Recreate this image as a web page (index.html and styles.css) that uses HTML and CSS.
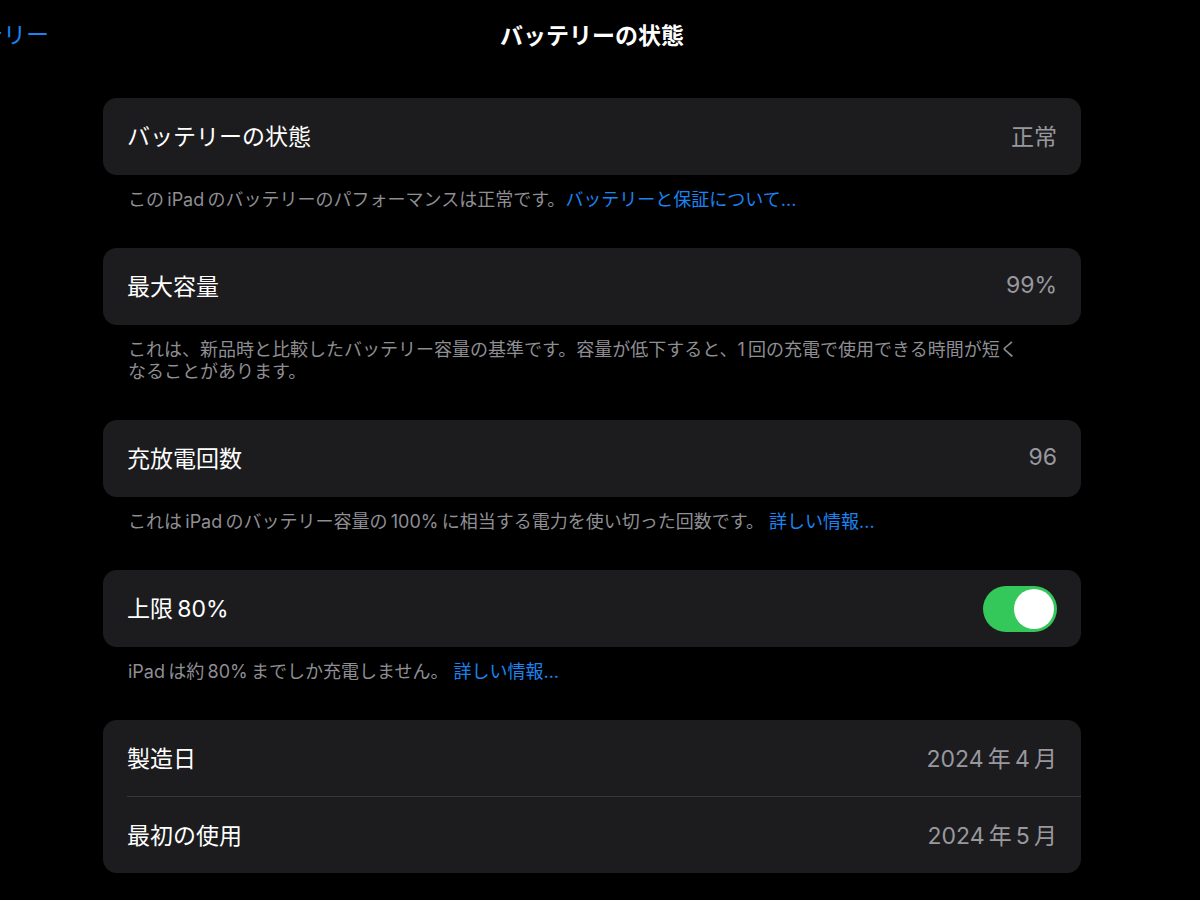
FILE: index.html
```html
<!DOCTYPE html>
<html lang="ja">
<head>
<meta charset="utf-8">
<title>バッテリーの状態</title>
<link rel="stylesheet" href="styles.css">
</head>
<body>
<header class="nav">
  <a class="back">バッテリー</a>
  <h1 class="title">バッテリーの状態</h1>
</header>
<main class="content">
  <section class="group">
    <div class="card">
      <div class="row"><span class="label">バッテリーの状態</span><span class="value">正常</span></div>
    </div>
    <p class="note">この&#8201;iPad&#8201;のバッテリーのパフォーマンスは正常です。<a class="link">バッテリーと保証について...</a></p>
  </section>
  <section class="group">
    <div class="card">
      <div class="row"><span class="label">最大容量</span><span class="value">99%</span></div>
    </div>
    <p class="note">これは、新品時と比較したバッテリー容量の基準です。容量が低下すると、1&#8201;回の充電で使用できる時間が短く<br>なることがあります。</p>
  </section>
  <section class="group">
    <div class="card">
      <div class="row"><span class="label">充放電回数</span><span class="value">96</span></div>
    </div>
    <p class="note">これは&#8201;iPad&#8201;のバッテリー容量の&#8201;100%&#8201;に相当する電力を使い切った回数です。 <a class="link">詳しい情報...</a></p>
  </section>
  <section class="group">
    <div class="card">
      <div class="row"><span class="label">上限&#8201;80%</span><span class="toggle"><span class="knob"></span></span></div>
    </div>
    <p class="note">iPad&#8201;は約&#8201;80%&#8201;までしか充電しません。 <a class="link">詳しい情報...</a></p>
  </section>
  <section class="group">
    <div class="card">
      <div class="row row-split"><span class="label">製造日</span><span class="value">2024&#8201;年&#8201;4&#8201;月</span></div>
      <div class="row row-last"><span class="label">最初の使用</span><span class="value">2024&#8201;年&#8201;5&#8201;月</span></div>
    </div>
  </section>
</main>
</body>
</html>
```

FILE: styles.css
```css
html, body {
  margin: 0;
  padding: 0;
  background: #000;
  width: 1200px;
  height: 900px;
  overflow: hidden;
}
body {
  font-family: "Inter", "Noto Sans CJK JP", sans-serif;
  color: #fff;
}
.nav {
  height: 70px;
  display: flex;
  align-items: center;
  justify-content: center;
  position: relative;
}
.back {
  position: absolute;
  left: -66px;
  top: 0;
  line-height: 70px;
  font-size: 23px;
  color: #1a84f0;
}
.title {
  margin: 0 0 2px -16px;
  font-size: 23px;
  font-weight: 700;
}
.content {
  padding: 28px 119px 0 103px;
}
.group {
  margin-bottom: 37px;
}
.card {
  background: #1c1c1e;
  border-radius: 14px;
  overflow: hidden;
}
.row {
  height: 77px;
  margin-left: 24px;
  padding-right: 24px;
  padding-bottom: 4px;
  box-sizing: border-box;
  display: flex;
  align-items: center;
  justify-content: space-between;
  font-size: 23px;
}
.row-split {
  height: 77px;
  border-bottom: 1px solid #38383a;
  padding-bottom: 3px;
}
.row-last {
  height: 76px;
  padding-bottom: 2px;
}
.label {
  color: #fff;
}
.value {
  color: #98989e;
}
.note {
  margin: 0;
  padding: 14px 24px 0 25px;
  font-size: 18px;
  line-height: 22px;
  color: #8e8e93;
}
.link {
  color: #1a84f0;
}
.toggle {
  width: 74px;
  height: 46px;
  border-radius: 23px;
  background: #34c759;
  display: flex;
  align-items: center;
  justify-content: flex-end;
  padding-right: 3px;
  box-sizing: border-box;
  margin-top: 4px;
}
.knob {
  width: 40px;
  height: 40px;
  border-radius: 50%;
  background: #fff;
}
```
